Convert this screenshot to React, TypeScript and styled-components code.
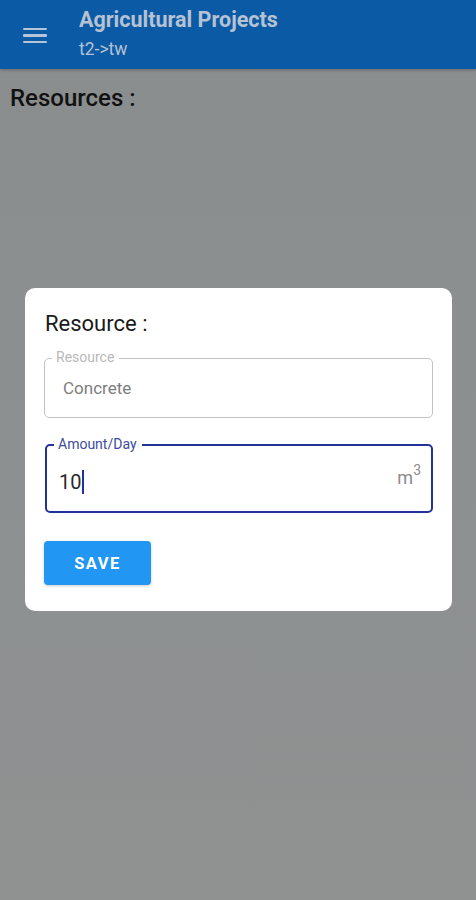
import React from "react";
import styled, { createGlobalStyle } from "styled-components";

const Global = createGlobalStyle`
  html, body { margin: 0; padding: 0; }
  body { font-family: Roboto, "Noto Sans", Arial, sans-serif; background: #8c8f90; }
`;

const Screen = styled.div`
  width: 476px;
  height: 900px;
  display: flex;
  flex-direction: column;
  background: linear-gradient(180deg, #8a8d8e 0%, #8d9090 50%, #909292 100%);
  overflow: hidden;
`;

const AppBar = styled.header`
  height: 69px;
  flex-shrink: 0;
  background: #0b5aa6;
  display: flex;
  align-items: center;
  box-shadow: 0 1px 3px rgba(0,0,0,0.25);
`;

const MenuButton = styled.div`
  width: 24px;
  margin-left: 23px;
  margin-right: 32px;
  display: flex;
  flex-direction: column;
  gap: 4px;
  margin-top: 2px;
`;

const MenuLine = styled.span`
  display: block;
  height: 2.5px;
  background: #b5c4d6;
  border-radius: 1px;
`;

const Titles = styled.div`
  display: flex;
  flex-direction: column;
  margin-top: -3px;
`;

const Title = styled.div`
  font-size: 21.5px;
  font-weight: 700;
  color: #b6c2d2;
  line-height: 26px;
`;

const Subtitle = styled.div`
  font-size: 17.5px;
  color: #b6c2d2;
  line-height: 22px;
  margin-top: 5px;
`;

const PageHeading = styled.div`
  font-size: 24px;
  font-weight: 500;
  color: #111;
  padding: 15px 0 0 10px;
  line-height: 28px;
`;

const Body = styled.div`
  flex: 1;
  display: flex;
  flex-direction: column;
`;

const Card = styled.div`
  margin: 176px 24px 0 25px;
  background: #fff;
  border-radius: 10px;
  padding: 22px 19px 26px 19px;
  display: flex;
  flex-direction: column;
`;

const CardTitle = styled.div`
  font-size: 22px;
  color: #1a1a1a;
  line-height: 28px;
  margin-left: 1px;
`;

const Field = styled.div<{ $focused?: boolean }>`
  position: relative;
  height: ${p => (p.$focused ? "65px" : "58px")};
  border: ${p => (p.$focused ? "2px solid #23329a" : "1.5px solid #c2c2c2")};
  border-radius: 5px;
  display: flex;
  align-items: center;
  padding: 0 ${p => (p.$focused ? "8px" : "18px")} 0 ${p => (p.$focused ? "12px" : "18px")};
  margin-top: ${p => (p.$focused ? "26px" : "20px")};
  margin-left: ${p => (p.$focused ? "1px" : "0")};
  margin-right: 0;
`;

const FieldLabel = styled.span<{ $focused?: boolean }>`
  position: absolute;
  top: -10px;
  left: 7px;
  padding: 0 5px 0 4px;
  background: #fff;
  font-size: 14px;
  line-height: 16px;
  color: ${p => (p.$focused ? "#3c4a9e" : "#b9b9b9")};
`;

const FieldValue = styled.span<{ $focused?: boolean }>`
  font-size: ${p => (p.$focused ? "20px" : "17px")};
  color: ${p => (p.$focused ? "#2a2a2a" : "#7d7d7d")};
  display: flex;
  align-items: center;
  margin-top: ${p => (p.$focused ? "7px" : "0")};
`;

const Caret = styled.span`
  display: inline-block;
  width: 2px;
  height: 24px;
  background: #23329a;
  margin-left: 1px;
`;

const Unit = styled.span`
  margin-left: auto;
  margin-right: 2px;
  font-size: 18px;
  color: #8a8a8a;
  margin-top: -6px;
  sup { font-size: 14px; position: relative; top: -2px; }
`;

const SaveButton = styled.button`
  align-self: flex-start;
  margin-top: 28px;
  width: 107px;
  height: 44px;
  border: none;
  border-radius: 4px;
  background: #2196f3;
  color: #fff;
  font-family: Roboto, Arial, sans-serif;
  font-size: 16.5px;
  font-weight: 700;
  letter-spacing: 1.5px;
  box-shadow: 0 1px 3px rgba(0,0,0,0.2);
`;

export default function App() {
  return (
    <>
      <Global />
      <Screen>
        <AppBar>
          <MenuButton>
            <MenuLine />
            <MenuLine />
            <MenuLine />
          </MenuButton>
          <Titles>
            <Title>Agricultural Projects</Title>
            <Subtitle>t2-&gt;tw</Subtitle>
          </Titles>
        </AppBar>
        <Body>
          <PageHeading>Resources :</PageHeading>
          <Card>
            <CardTitle>Resource :</CardTitle>
            <Field>
              <FieldLabel>Resource</FieldLabel>
              <FieldValue>Concrete</FieldValue>
            </Field>
            <Field $focused>
              <FieldLabel $focused>Amount/Day</FieldLabel>
              <FieldValue $focused>
                10
                <Caret />
              </FieldValue>
              <Unit>
                m<sup>3</sup>
              </Unit>
            </Field>
            <SaveButton>SAVE</SaveButton>
          </Card>
        </Body>
      </Screen>
    </>
  );
}
